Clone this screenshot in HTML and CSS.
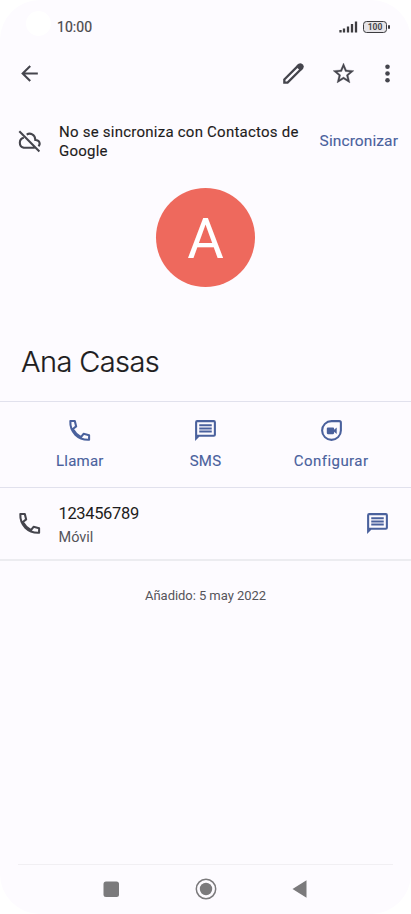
FILE: index.html
```html
<!DOCTYPE html>
<html lang="es">
<head>
<meta charset="utf-8">
<title>Ana Casas</title>
<link rel="stylesheet" href="styles.css">
</head>
<body>
<svg class="defs" aria-hidden="true">
  <symbol id="phone" viewBox="0 0 24 24"><path d="M3.200 2.800h4.300l1.300 5.300-3.200 2.500c1.800 3.400 4.400 6 7.800 7.800l2.500-3.200 5.300 1.300v4.300C10.500 21.300 2.700 13.500 3.200 2.800zM5.600 10.600l3.200-2.500M13.400 18.400l2.500-3.200" fill="none" stroke="currentColor" stroke-width="2" stroke-linejoin="round"/></symbol>
  <symbol id="message" viewBox="0 0 24 24"><path fill="currentColor" d="M4 2h16a2 2 0 0 1 2 2v12a2 2 0 0 1-2 2H6l-4 4V4a2 2 0 0 1 2-2zm0 2v12h16V4zM6 6h12v2H6zm0 3h12v2H6zm0 3h12v2H6z"/></symbol>
</svg>
<div class="screen">
  <header class="status">
    <span class="camera"></span>
    <span class="time">10:00</span>
    <svg class="signal" viewBox="0 0 19 12"><path d="M1.500 9v2.500M5 7.500v4M9 5.500v6M13 3v8.500M17 .5v11" fill="none" stroke="#3d3c40" stroke-width="2.300"/></svg>
    <span class="battery">100</span>
  </header>
  <nav class="appbar">
    <svg class="icon back" viewBox="0 0 24 24"><path fill="currentColor" d="M20 11H7.830l5.590-5.590L12 4l-8 8 8 8 1.410-1.410L7.830 13H20z"/></svg>
    <svg class="icon edit" viewBox="0 0 24 24"><path d="M3.200 17.700 16.500 4.400l3.100 3.100L6.300 20.800H3.200z" fill="none" stroke="currentColor" stroke-width="2.200"/><path d="m14.300 5.200 2.500-2.500q1.900-1.400 3.600.2l.8.800q1.500 1.700.1 3.400l-2.500 2.500z" fill="currentColor"/></svg>
    <svg class="icon star" viewBox="0 0 24 24"><path fill="currentColor" stroke="currentColor" stroke-width=".3" d="m22 9.240-7.190-.62L12 2 9.190 8.630 2 9.240l5.460 4.730L5.820 21 12 17.270 18.180 21l-1.630-7.030zM12 15.400l-3.760 2.270 1-4.280-3.320-2.880 4.380-.38L12 6.100l1.710 4.040 4.380.38-3.320 2.880 1 4.280z"/></svg>
    <svg class="icon more" viewBox="0 0 24 24"><g fill="currentColor"><circle cx="12" cy="5.500" r="2.200"/><circle cx="12" cy="12" r="2.200"/><circle cx="12" cy="18.500" r="2.200"/></g></svg>
  </nav>
  <section class="banner">
    <svg class="icon cloud" viewBox="0 0 24 24"><path d="M6.500 9.300A5 5 0 0 0 6.500 19H17M9.300 6.300C12.700 4.200 17.400 6.300 17.600 11.500c3.800-.1 5.400 3.700 3 6.100M2.200 3.200 21.500 22.500" fill="none" stroke="currentColor" stroke-width="2"/></svg>
    <p class="banner-text">No se sincroniza con Contactos de Google</p>
    <a class="sync">Sincronizar</a>
  </section>
  <div class="avatar"><span>A</span></div>
  <h1 class="name">Ana Casas</h1>
  <section class="actions">
    <div class="action"><svg class="icon"><use href="#phone"/></svg><span class="call-label">Llamar</span></div>
    <div class="action"><svg class="icon"><use href="#message"/></svg><span class="sms-label">SMS</span></div>
    <div class="action"><svg class="icon" viewBox="0 0 24 24"><path d="M12 3h7.500q1.500 0 1.500 1.500V12a9 9 0 1 1-9-9z" fill="none" stroke="currentColor" stroke-width="2"/><path d="M8.500 9h5q1 0 1 1v1.200l2.500-2v6.100l-2.500-2v1.200q0 1-1 1h-5q-1 0-1-1V10q0-1 1-1z" fill="currentColor"/></svg><span class="setup-label">Configurar</span></div>
  </section>
  <section class="phone-row">
    <svg class="icon"><use href="#phone"/></svg>
    <div class="phone-info"><span class="number">123456789</span><span class="kind">Móvil</span></div>
    <svg class="icon msg"><use href="#message"/></svg>
  </section>
  <p class="added">Añadido: 5 may 2022</p>
  <footer class="navbar">
    <svg class="key" viewBox="0 0 22 22"><rect x="3.500" y="3.500" width="15.500" height="15.500" rx="2.500" fill="#7b7a7c"/></svg>
    <svg class="key" viewBox="0 0 22 22"><circle cx="11" cy="11" r="9.700" fill="none" stroke="#7b7a7c" stroke-width="1.500"/><circle cx="11" cy="11" r="6.200" fill="#7b7a7c"/></svg>
    <svg class="key" viewBox="0 0 22 22"><path d="M3.500 11 17.500 2.300v17.400z" fill="#7b7a7c"/></svg>
  </footer>
</div>
</body>
</html>
```
FILE: styles.css
```css
* { box-sizing: border-box; }
body { margin: 0; background: #fff; font-family: Roboto, "Liberation Sans", sans-serif; color: #1d1c20; }
p, h1 { margin: 0; }
.defs { position: absolute; width: 0; height: 0; }
.screen { width: 411px; height: 914px; background: #fdfbff; border-radius: 40px; display: flex; flex-direction: column; overflow: hidden; }
.icon { width: 25px; height: 25px; flex: none; color: #45454d; }
.status { height: 54px; display: flex; align-items: center; padding: 0 22px 0 26px; flex: none; }
.camera { width: 25px; height: 25px; border-radius: 50%; background: #fff; margin-top: -8px; }
.time { margin-left: 6px; font-size: 14px; letter-spacing: .05px; -webkit-text-stroke: .2px; color: #49484c; }
.signal { width: 19px; height: 12px; margin-left: auto; }
.battery { position: relative; width: 24px; height: 12px; margin: 0 2px 0 5px; border: 1.500px solid #3d3c40; border-radius: 3.500px; background: #e6e4e8; font-size: 8.500px; line-height: 10.500px; font-weight: 700; text-align: center; color: #49484c; }
.battery::after { content: ""; position: absolute; right: -4px; top: 3px; width: 2px; height: 4px; background: #3d3c40; border-radius: 1px; }
.appbar { height: 38px; display: flex; align-items: center; padding: 0 11px 0 17px; flex: none; }
.edit { margin-left: auto; }
.star { margin-left: 25px; }
.more { margin-left: 19px; }
.banner { height: 96px; display: flex; align-items: center; padding: 2px 13px 0 17px; flex: none; }
.cloud { margin-top: -2px; }
.banner-text { width: 250px; margin: 1px 0 0 17px; font-size: 15px; line-height: 19px; letter-spacing: .24px; -webkit-text-stroke: .12px; }
.sync { margin-left: auto; font-size: 15.500px; letter-spacing: .1px; -webkit-text-stroke: .1px; color: #4a619d; white-space: nowrap; }
.avatar { width: 99px; height: 99px; margin: 0 auto; border-radius: 50%; background: #ee695d; color: #fff; display: flex; align-items: center; justify-content: center; font-size: 56px; padding-top: 2px; flex: none; }
.name { height: 114px; padding: 55px 0 0 21px; font-family: Inter, sans-serif; font-size: 29px; line-height: 40px; font-weight: 300; letter-spacing: -.6px; -webkit-text-stroke: .2px; flex: none; }
.actions { height: 87px; border-top: 1px solid #e1e1ed; border-bottom: 1px solid #e1e1ed; display: grid; grid-template-columns: repeat(3, 1fr); padding: 16px 17px 0; flex: none; }
.action { display: flex; flex-direction: column; align-items: center; color: #4a619d; font-size: 15px; letter-spacing: .2px; -webkit-text-stroke: .12px; gap: 8px; line-height: 20px; }
.setup-label { letter-spacing: .45px; }
.action .icon, .phone-row .msg { color: #4a619d; }
.phone-row { height: 73px; display: flex; align-items: center; padding: 0 21px 0 17px; border-bottom: 2px solid #ececf0; flex: none; }
.phone-info { display: flex; flex-direction: column; margin: 5px 0 0 16.500px; }
.number { font-size: 16.500px; line-height: 24px; letter-spacing: -.35px; }
.kind { font-size: 14.500px; line-height: 24px; color: #55545a; }
.msg { margin-left: auto; }
.added { margin-top: 25px; text-align: center; font-size: 13px; letter-spacing: -.05px; line-height: 20px; color: #55545a; }
.navbar { margin: auto 18px 0 18px; height: 50px; border-top: 1px solid #f1eff3; display: flex; justify-content: space-between; align-items: center; padding: 0 82px 2px; flex: none; }
.key { width: 22px; height: 22px; }
```
